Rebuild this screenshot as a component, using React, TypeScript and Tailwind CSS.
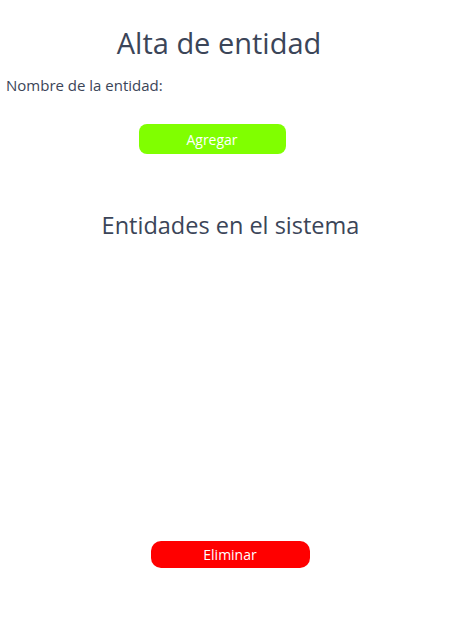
export default function App() {
  return (
    <div className="min-h-[638px] w-[460px] bg-white text-[#3b4558] [font-family:'Open_Sans','Noto_Sans',sans-serif]">
      {/* alta */}
      <div className="flex w-[438px] flex-col pt-[25px]">
        <h1 className="text-center text-[29px] leading-[36px]">Alta de entidad</h1>
        <div className="mt-[14px] flex items-center pl-[6px] text-[15px] leading-[20px]">
          <label>Nombre de la entidad:</label>
        </div>
        <div className="mt-[29px] flex justify-center">
          <button className="ml-[-14px] h-[30px] w-[147px] rounded-[8px] bg-[#80ff00] text-[14px] text-white">
            Agregar
          </button>
        </div>
      </div>

      {/* listado */}
      <div className="mt-[56px] flex flex-col items-center">
        <h2 className="ml-[1px] text-[23.5px] leading-[30px]">Entidades en el sistema</h2>
        <div className="h-[301px]" />
        <button className="h-[27px] w-[159px] rounded-[10px] bg-[#ff0000] text-[14px] text-white">
          Eliminar
        </button>
      </div>
    </div>
  )
}
